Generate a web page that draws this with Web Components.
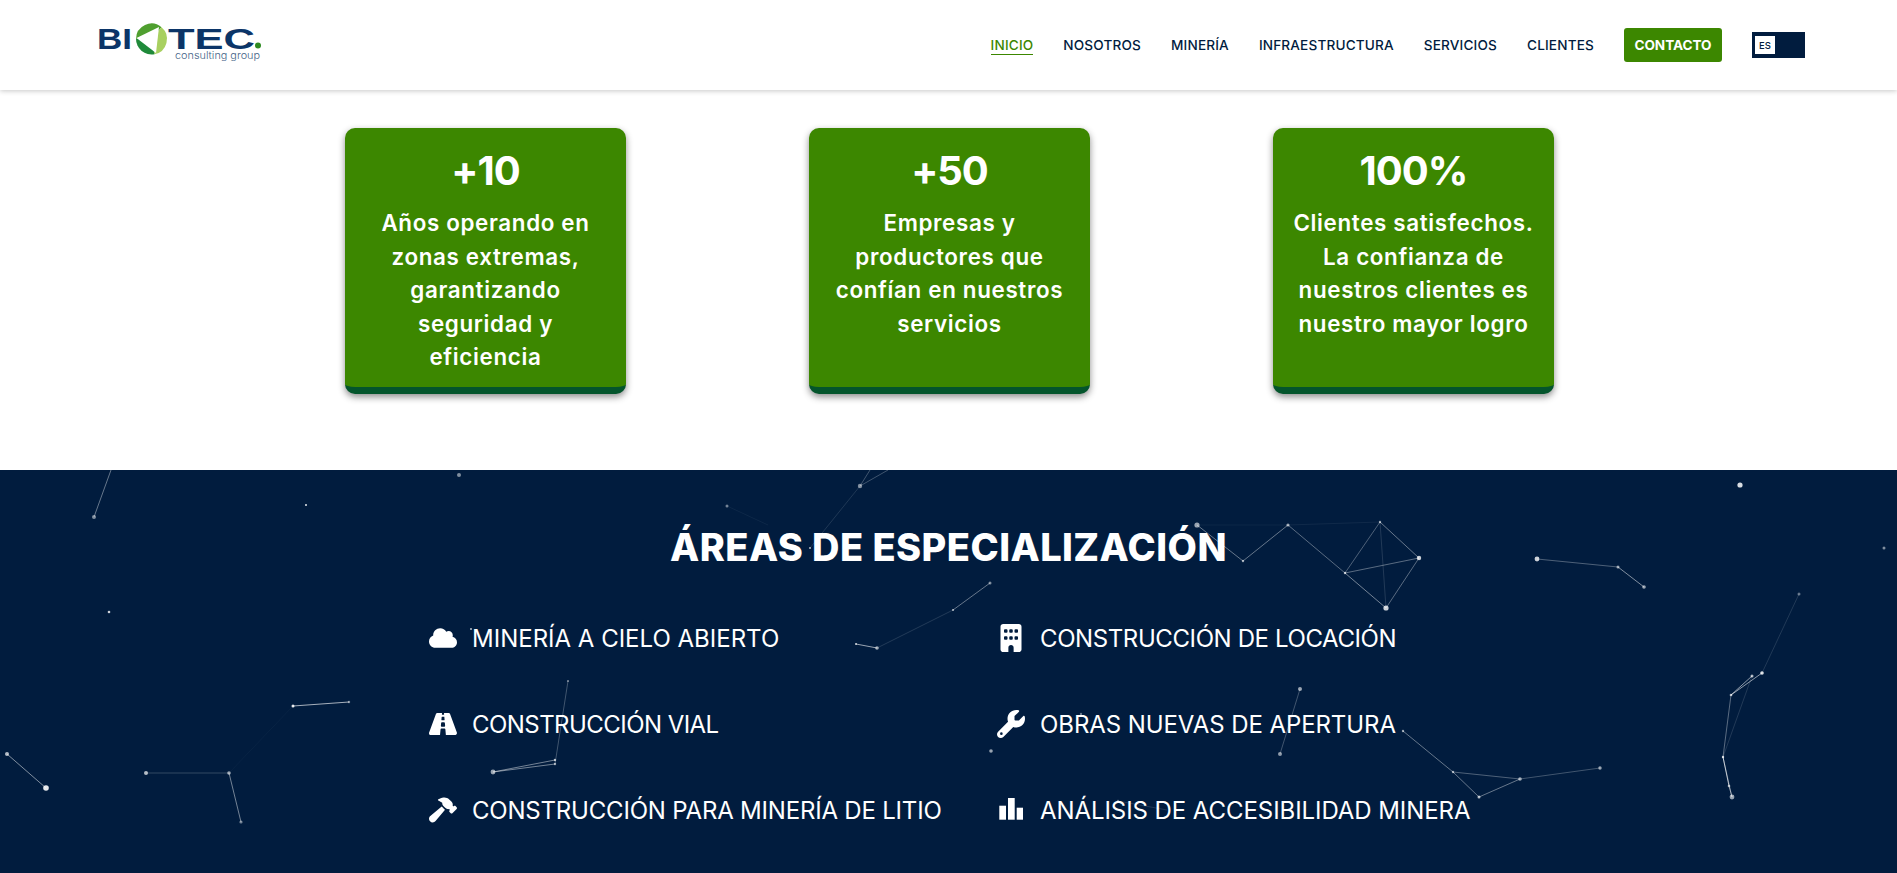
<!DOCTYPE html>
<html lang="es">
<head>
<meta charset="utf-8">
<title>Biotec Consulting Group</title>
<style>
html, body { margin: 0; background: #fff; }
body { font-family: Inter, "Liberation Sans", sans-serif; height: 873px; overflow: hidden; }
</style>
</head>
<body>
<bt-header>
  <bt-nav-link active>INICIO</bt-nav-link>
  <bt-nav-link>NOSOTROS</bt-nav-link>
  <bt-nav-link>MINERÍA</bt-nav-link>
  <bt-nav-link>INFRAESTRUCTURA</bt-nav-link>
  <bt-nav-link>SERVICIOS</bt-nav-link>
  <bt-nav-link>CLIENTES</bt-nav-link>
</bt-header>
<bt-stats>
  <bt-stat-card value="+10">Años operando en<br>zonas extremas,<br>garantizando<br>seguridad y<br>eficiencia</bt-stat-card>
  <bt-stat-card value="+50">Empresas y<br>productores que<br>confían en nuestros<br>servicios</bt-stat-card>
  <bt-stat-card value="100%">Clientes satisfechos.<br>La confianza de<br>nuestros clientes es<br>nuestro mayor logro</bt-stat-card>
</bt-stats>
<bt-specialties>
  <bt-area-item icon="cloud">MINERÍA A CIELO ABIERTO</bt-area-item>
  <bt-area-item icon="building" style="letter-spacing:-.4px">CONSTRUCCIÓN DE LOCACIÓN</bt-area-item>
  <bt-area-item icon="road" style="letter-spacing:-.55px">CONSTRUCCIÓN VIAL</bt-area-item>
  <bt-area-item icon="wrench" style="letter-spacing:-.08px">OBRAS NUEVAS DE APERTURA</bt-area-item>
  <bt-area-item icon="hammer" style="letter-spacing:-.2px">CONSTRUCCIÓN PARA MINERÍA DE LITIO</bt-area-item>
  <bt-area-item icon="chart" style="letter-spacing:-.07px">ANÁLISIS DE ACCESIBILIDAD MINERA</bt-area-item>
</bt-specialties>

<script>
(function() {

const ICONS = {
  cloud: `<svg viewBox="0 0 640 512"><path d="M537.6 226.6c4.1-10.7 6.4-22.4 6.4-34.6 0-53-43-96-96-96-19.7 0-38.1 6-53.3 16.2C367 64.2 315.3 32 256 32c-88.4 0-160 71.6-160 160 0 2.7.1 5.4.2 8.1C40.2 219.8 0 273.2 0 336c0 79.5 64.5 144 144 144h368c70.7 0 128-57.3 128-128 0-61.9-44-113.6-102.4-125.4z"/></svg>`,
  road: `<svg viewBox="0 64 576 384" preserveAspectRatio="none" style="height:22px"><path d="M573.19 402.67l-139.79-320C428.43 71.29 417.6 64 405.68 64h-97.59l2.45 23.16c.5 4.72-3.2 8.84-7.96 8.84h-29.16c-4.75 0-8.46-4.12-7.96-8.84L267.91 64h-97.59c-11.93 0-22.76 7.29-27.73 18.67L2.8 402.67C-6.45 423.86 8.31 448 30.11 448h196.84l10.31-97.68c.86-8.14 7.72-14.32 15.91-14.32h68.07c8.19 0 15.05 6.18 15.91 14.32L347.05 448h196.84c21.8 0 36.56-24.14 29.3-45.33zM260.4 135.16a8 8 0 0 1 7.96-7.16h39.29c4.09 0 7.53 3.09 7.96 7.16l4.6 43.58c.75 7.09-4.81 13.26-11.93 13.26h-40.54c-7.13 0-12.68-6.17-11.93-13.26l4.59-43.58zM315.64 304h-55.29c-9.5 0-16.91-8.23-15.91-17.68l5.07-48c.86-8.14 7.72-14.32 15.91-14.32h45.15c8.19 0 15.05 6.18 15.91 14.32l5.07 48c1 9.45-6.41 17.68-15.91 17.68z"/></svg>`,
  hammer: `<svg viewBox="0 0 576 512"><path d="M413.5 237.5c-28.2 4.8-58.2-3.6-80-25.4l-38.1-38.1C280.4 159 272 138.8 272 117.6V105.5L192.3 62c-5.3-2.9-8.6-8.6-8.3-14.7s3.9-11.5 9.5-14l47.2-21C259.1 4.2 279 0 299.2 0h18.1c36.7 0 72 14 98.7 39.1l44.6 42c24.2 22.8 33.2 55.7 26.6 86L503 183l8-8c9.4-9.4 24.6-9.4 33.9 0l24 24c9.4 9.4 9.4 24.6 0 33.9l-88 88c-9.4 9.4-24.6 9.4-33.9 0l-24-24c-9.4-9.4-9.4-24.6 0-33.9l8-8-17.5-17.5zM27.4 377.1L260.9 182.6c3.5 4.9 7.5 9.6 11.8 14l38.1 38.1c6 6 12.4 11.2 19.2 15.7L134.9 484.6c-14.5 17.4-36 27.4-58.6 27.4C34.1 512 0 477.8 0 435.7c0-22.6 10.1-44.1 27.4-58.6z"/></svg>`,
  building: `<svg viewBox="0 0 384 512"><path d="M48 0C21.5 0 0 21.5 0 48V464c0 26.5 21.5 48 48 48h96V432c0-26.5 21.5-48 48-48s48 21.5 48 48v80h96c26.5 0 48-21.5 48-48V48c0-26.5-21.5-48-48-48H48zM64 240c0-8.8 7.2-16 16-16h32c8.8 0 16 7.2 16 16v32c0 8.8-7.2 16-16 16H80c-8.8 0-16-7.2-16-16V240zm112-16h32c8.8 0 16 7.2 16 16v32c0 8.8-7.2 16-16 16H176c-8.8 0-16-7.2-16-16V240c0-8.8 7.2-16 16-16zm80 16c0-8.8 7.2-16 16-16h32c8.8 0 16 7.2 16 16v32c0 8.8-7.2 16-16 16H272c-8.8 0-16-7.2-16-16V240zM80 96h32c8.8 0 16 7.2 16 16v32c0 8.8-7.2 16-16 16H80c-8.8 0-16-7.2-16-16V112c0-8.8 7.2-16 16-16zm80 16c0-8.8 7.2-16 16-16h32c8.8 0 16 7.2 16 16v32c0 8.8-7.2 16-16 16H176c-8.8 0-16-7.2-16-16V112zM272 96h32c8.8 0 16 7.2 16 16v32c0 8.8-7.2 16-16 16H272c-8.8 0-16-7.2-16-16V112c0-8.8 7.2-16 16-16z"/></svg>`,
  wrench: `<svg viewBox="0 0 512 512"><path d="M352 320c88.4 0 160-71.6 160-160c0-15.3-2.2-30.1-6.2-44.2c-3.1-10.8-16.4-13.2-24.3-5.3l-76.8 76.8c-3 3-7.1 4.7-11.3 4.7H336c-8.8 0-16-7.2-16-16V118.6c0-4.2 1.7-8.3 4.7-11.3l76.8-76.8c7.9-7.9 5.4-21.2-5.3-24.3C382.1 2.2 367.3 0 352 0C263.6 0 192 71.6 192 160c0 19.1 3.4 37.5 9.5 54.5L19.9 396.1C7.2 408.8 0 426.1 0 444.1C0 481.6 30.4 512 67.9 512c18 0 35.3-7.2 48-19.9L297.5 310.5c17 6.2 35.4 9.5 54.5 9.5zM80 408a24 24 0 1 1 0 48 24 24 0 1 1 0-48z"/></svg>`,
  chart: `<svg viewBox="0 0 28 28"><rect x="2.3" y="9.7" width="6.7" height="14"/><rect x="11" y="2" width="6.7" height="21.7"/><rect x="19.7" y="11.7" width="6.3" height="12"/></svg>`
};

const headerTemplate = document.createElement('template');
headerTemplate.innerHTML = `<style>
:host {
    display: flex;
    align-items: center;
    justify-content: space-between;
    height: 90px;
    box-sizing: border-box;
    padding: 0 92px 0 97px;
    background: #fff;
    box-shadow: 0 1px 5px rgba(0, 0, 0, .22);
    position: relative;
    z-index: 2;
}
.logo { display: block; width: 166px; height: 60px; }
nav { display: flex; align-items: center; gap: 30px; }
.btn {
    background: #3c8700;
    color: #fff;
    font: 700 13.6px Inter, sans-serif;
    letter-spacing: -.05px;
    height: 34px;
    width: 98px;
    display: flex;
    align-items: center;
    justify-content: center;
    border-radius: 3px;
}
.lang {
    width: 53px;
    height: 26px;
    background: #011c3e;
    box-sizing: border-box;
    padding: 4px 3px;
}
.lang span {
    display: flex;
    align-items: center;
    justify-content: center;
    width: 20px;
    height: 18px;
    background: #fff;
    color: #011c3e;
    font: 500 9.5px Inter, sans-serif;
}
</style>
<svg class="logo" viewBox="0 -7 166 60">
  <g fill="#0b3568" font-family="'Liberation Sans', sans-serif" font-weight="700">
    <text x="0" y="26.5" font-size="29" textLength="35" lengthAdjust="spacingAndGlyphs">BI</text>
    <text x="71" y="26.5" font-size="29" textLength="87" lengthAdjust="spacingAndGlyphs">TEC</text>
  </g>
  <path d="M54.5 17L39 17A15.5 15.5 0 0 1 64.5 5.2Z" fill="#4f9f2f"/>
  <path d="M54.5 17L64.5 5.2A15.5 15.5 0 0 1 57.5 32.2Z" fill="#a8d060"/>
  <path d="M54.5 17L57.5 32.2A15.5 15.5 0 0 1 39 17Z" fill="#1f8a3a"/>
  <path d="M39.5 16L62 5L59 31Z" fill="#fff"/>
  <circle cx="161" cy="23.5" r="3" fill="#2e8b22"/>
  <text x="78" y="37" font-family="Inter, sans-serif" font-weight="300" font-size="10.5" fill="#3f5f86" textLength="85" lengthAdjust="spacingAndGlyphs">consulting group</text>
</svg>
<nav>
  <slot></slot>
  <div class="btn">CONTACTO</div>
  <div class="lang"><span>ES</span></div>
</nav>`;

class BtHeader extends HTMLElement {
    constructor() {
        super();
        this.attachShadow({mode: 'open'});
        this.shadowRoot.appendChild(headerTemplate.content.cloneNode(true));
    }
}
customElements.define('bt-header', BtHeader);

const navLinkTemplate = document.createElement('template');
navLinkTemplate.innerHTML = `<style>
:host {
    display: block;
    color: #011c3e;
    font: 500 13.6px Inter, sans-serif;
    letter-spacing: .16px;
    line-height: 18px;
    padding: 1px 0 0;
    border-bottom: 1.5px solid transparent;
}
:host([active]) { color: #3c8700; border-bottom-color: #3c8700; }
</style><slot></slot>`;

class BtNavLink extends HTMLElement {
    constructor() {
        super();
        this.attachShadow({mode: 'open'});
        this.shadowRoot.appendChild(navLinkTemplate.content.cloneNode(true));
    }
}
customElements.define('bt-nav-link', BtNavLink);

const statsTemplate = document.createElement('template');
statsTemplate.innerHTML = `<style>
:host {
    display: grid;
    grid-template-columns: repeat(3, 281px);
    column-gap: 183px;
    justify-content: center;
    padding: 38px 0 76px 2px;
    height: 380px;
    box-sizing: border-box;
}
</style><slot></slot>`;

class BtStats extends HTMLElement {
    constructor() {
        super();
        this.attachShadow({mode: 'open'});
        this.shadowRoot.appendChild(statsTemplate.content.cloneNode(true));
    }
}
customElements.define('bt-stats', BtStats);

const cardTemplate = document.createElement('template');
cardTemplate.innerHTML = `<style>
:host {
    display: block;
    background: #3c8700;
    color: #fff;
    text-align: center;
    border-radius: 10px;
    border-bottom: 7px solid #04552c;
    box-shadow: 0 3px 7px rgba(0, 0, 0, .45);
    box-sizing: border-box;
    padding-top: 19px;
}
.num { font: 700 40px/48px Inter, sans-serif; letter-spacing: -1px; margin-bottom: 11px; }
.txt { font: 600 22.4px/33.5px Inter, sans-serif; letter-spacing: .65px; }
</style>
<div class="num"></div>
<div class="txt"><slot></slot></div>`;

class BtStatCard extends HTMLElement {
    constructor() {
        super();
        this.attachShadow({mode: 'open'});
        this.shadowRoot.appendChild(cardTemplate.content.cloneNode(true));
        this.shadowRoot.querySelector('.num').textContent = this.getAttribute('value');
    }
}
customElements.define('bt-stat-card', BtStatCard);

// dots and links of the background, in page coordinates
const DOTS = [
  [94,517,2,.5],[306,505,1,.9],[109,612,1.3,.8],[293,706,1.5,.9],[349,702,1.2,.5],[7,754,2,.7],[46,788,2.8,.9],
  [146,773,2,.7],[229,773,1.8,.6],[241,822,1.6,.45],[459,475,2,.5],[860,486,2.2,.5],[810,548,1,.7],[727,506,1.5,.45],
  [990,583,1.5,.5],[953,610,1,.7],[877,648,1.8,.6],[856,644,1,.8],[471,629,1,.7],[568,681,1,.5],[555,760,1.2,.7],
  [555,764,1.2,.6],[493,772,2.4,.6],[991,751,1.8,.6],[1081,714,1.2,.4],[1118,801,1.2,.4],
  [1740,485,2.6,.85],[1884,548,1.5,.5],[1197,525,2.6,.6],[1243,561,1.2,.6],[1288,525,1.6,.6],[1345,573,1.2,.7],
  [1380,522,1.2,.6],[1419,558,2.2,.8],[1386,608,2.6,.8],[1537,559,2.4,.8],[1618,567,1.5,.6],[1644,587,1.8,.6],
  [1799,594,1.5,.4],[1762,673,1.8,.85],[1752,676,1.5,.7],[1731,695,1.3,.7],[1723,757,1.2,.8],[1729,786,1.3,.6],[1732,797,2.4,.6],
  [1300,689,2,.6],[1280,754,2,.55],[1403,731,1.2,.6],[1453,772,1.2,.6],[1520,779,1.8,.6],[1479,797,1.5,.7],[1600,768,1.7,.6]
];
const LINKS = [
  [94,517,111,470,.4],[293,706,349,702,.65],[7,754,46,788,.5],[146,773,229,773,.2],[229,773,241,822,.45],[229,773,293,706,.03],
  [860,486,870,470,.25],[860,486,888,470,.25],[860,486,810,548,.12],[727,506,768,525,.05],[990,583,953,610,.4],[953,610,877,648,.13],[877,648,856,644,.6],
  [568,681,555,764,.25],[493,772,555,760,.45],[493,772,555,764,.45],[1118,801,1167,810,.12],
  [1197,525,1243,561,.4],[1243,561,1288,525,.4],[1288,525,1345,573,.35],[1345,573,1380,522,.3],[1380,522,1419,558,.4],[1419,558,1386,608,.35],
  [1386,608,1345,573,.45],[1345,573,1419,558,.35],[1380,522,1386,608,.13],[1288,525,1380,522,.06],[1197,525,1288,525,.05],
  [1537,559,1618,567,.3],[1618,567,1644,587,.5],[1799,594,1762,673,.13],[1762,673,1731,695,.55],[1752,676,1731,695,.55],[1752,676,1723,757,.13],
  [1731,695,1723,757,.35],[1723,757,1729,786,.7],[1729,786,1732,797,.55],[1723,757,1732,797,.3],
  [1300,689,1280,754,.25],[1403,731,1453,772,.4],[1453,772,1520,779,.3],[1453,772,1479,797,.4],[1479,797,1520,779,.4],[1520,779,1600,768,.25]
];

const specialtiesTemplate = document.createElement('template');
specialtiesTemplate.innerHTML = `<style>
:host {
    display: block;
    position: relative;
    height: 403px;
    overflow: hidden;
    background: #011c3e;
    color: #fff;
}
svg.bg { position: absolute; left: 0; top: 0; width: 1897px; height: 403px; }
.inner { position: relative; padding-top: 50px; }
h2 {
    margin: 0;
    text-align: center;
    font: 800 38px/54px Inter, sans-serif;
    letter-spacing: .45px;
}
.grid {
    display: grid;
    grid-template-columns: 568px 474px;
    grid-auto-rows: 86px;
    margin: 21px 0 0 429px;
}
</style>
<svg class="bg" viewBox="0 470 1897 403"></svg>
<div class="inner">
  <h2>ÁREAS DE ESPECIALIZACIÓN</h2>
  <div class="grid"><slot></slot></div>
</div>`;

class BtSpecialties extends HTMLElement {
    constructor() {
        super();
        this.attachShadow({mode: 'open'});
        this.shadowRoot.appendChild(specialtiesTemplate.content.cloneNode(true));
        let out = '';
        for (const l of LINKS) {
            out += `<line x1="${l[0]}" y1="${l[1]}" x2="${l[2]}" y2="${l[3]}" stroke="#fff" stroke-opacity="${l[4]}" stroke-width="1"/>`;
        }
        for (const d of DOTS) {
            out += `<circle cx="${d[0]}" cy="${d[1]}" r="${d[2]}" fill="#fff" fill-opacity="${d[3]}"/>`;
        }
        this.shadowRoot.querySelector('svg.bg').innerHTML = out;
    }
}
customElements.define('bt-specialties', BtSpecialties);

const itemTemplate = document.createElement('template');
itemTemplate.innerHTML = `<style>
:host {
    display: flex;
    align-items: center;
    gap: 15px;
    height: 86px;
    color: #fff;
    font: 400 24px Inter, sans-serif;
    white-space: nowrap;
}
.icon { width: 28px; height: 28px; display: flex; align-items: center; justify-content: center; flex: none; }
.icon svg { width: 28px; height: 28px; fill: #fff; display: block; }
</style>
<span class="icon"></span><span><slot></slot></span>`;

class BtAreaItem extends HTMLElement {
    constructor() {
        super();
        this.attachShadow({mode: 'open'});
        this.shadowRoot.appendChild(itemTemplate.content.cloneNode(true));
        this.shadowRoot.querySelector('.icon').innerHTML = ICONS[this.getAttribute('icon')];
    }
}
customElements.define('bt-area-item', BtAreaItem);

})();
</script>
</body>
</html>
